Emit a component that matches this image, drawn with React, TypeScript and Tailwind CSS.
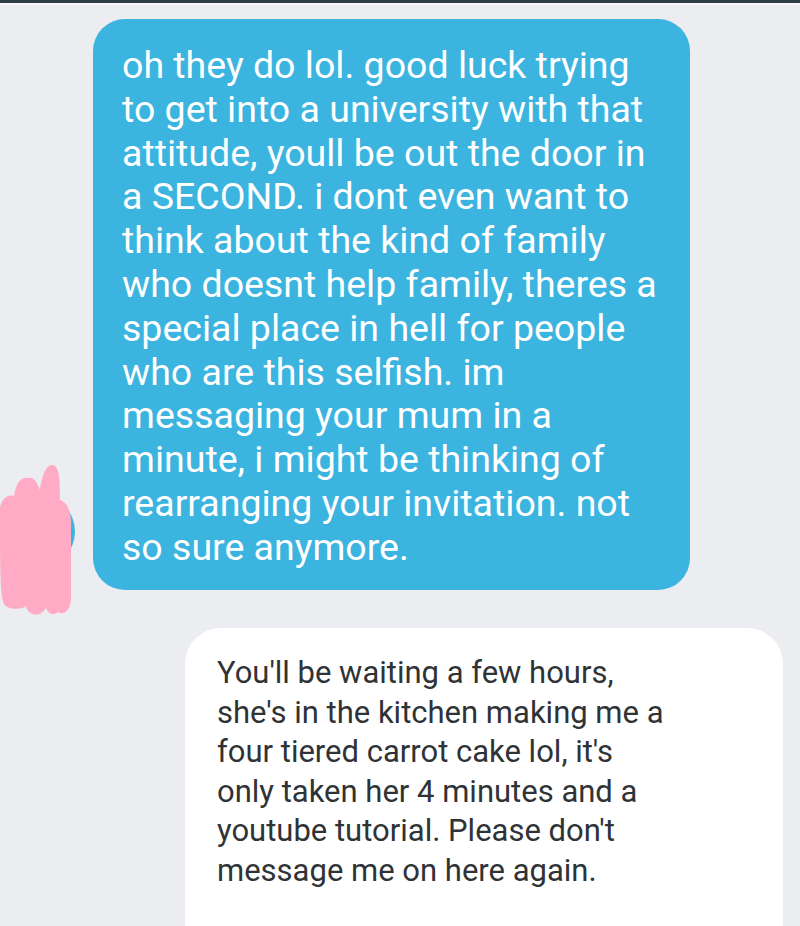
import { FC } from 'react';

const blueLines = [
  'oh they do lol. good luck trying',
  'to get into a university with that',
  'attitude, youll be out the door in',
  'a SECOND. i dont even want to',
  'think about the kind of family',
  'who doesnt help family, theres a',
  'special place in hell for people',
  'who are this selfish. im',
  'messaging your mum in a',
  'minute, i might be thinking of',
  'rearranging your invitation. not',
  'so sure anymore.',
];

const whiteLines = [
  "You'll be waiting a few hours,",
  "she's in the kitchen making me a",
  "four tiered carrot cake lol, it's",
  'only taken her 4 minutes and a',
  "youtube tutorial. Please don't",
  'message me on here again.',
];

const Scribble: FC = () => (
  <svg width="80" height="160" viewBox="0 0 80 160">
    <path
      fill="#ffabc6"
      d="M0 48 C2 38 8 34 14 36 C16 22 22 16 28 18 C34 16 38 24 40 30 C42 16 46 4 53 5 C60 6 60 24 60 40 C68 42 72 54 71 68 L71 140 C70 150 64 156 58 152 C54 156 48 154 46 148 C40 158 28 156 26 146 C22 150 8 150 4 144 C0 138 0 100 0 48 Z"
    />
  </svg>
);

const App: FC = () => {
  return (
    <div className="w-[800px] h-[926px] overflow-hidden bg-[#ecedf1] relative">
      <div className="h-[3px] bg-[#2c3d45]" />
      <div className="h-[2px] bg-[#f6f7f9]" />

      <div className="flex flex-col">
        <div className="relative pl-[93px] pt-[14px]">
          {/* avatar, mostly hidden behind the scribble */}
          <div className="absolute left-[2px] top-[490px] w-[73px] h-[73px] rounded-full bg-[#3bb4e0]" />
          <div className="absolute left-0 top-[455px]">
            <Scribble />
          </div>
          <div
            className="w-[597px] h-[571px] rounded-[32px] bg-[#3bb4e0] text-white pl-[29px] pt-[25px] text-[37.5px] leading-[43.8px] whitespace-nowrap"
            style={{ fontFamily: 'Roboto, "Noto Sans", sans-serif' }}
          >
            {blueLines.map((l) => (
              <div key={l}>{l}</div>
            ))}
          </div>
        </div>

        <div className="pl-[185px] pt-[38px]">
          <div
            className="w-[598px] h-[330px] rounded-[36px] bg-white text-[#2f3336] pl-[32px] pt-[25px] text-[31px] leading-[39.6px] whitespace-nowrap"
            style={{ fontFamily: 'Roboto, "Noto Sans", sans-serif' }}
          >
            {whiteLines.map((l) => (
              <div key={l}>{l}</div>
            ))}
          </div>
        </div>
      </div>
    </div>
  );
};

export default App;
